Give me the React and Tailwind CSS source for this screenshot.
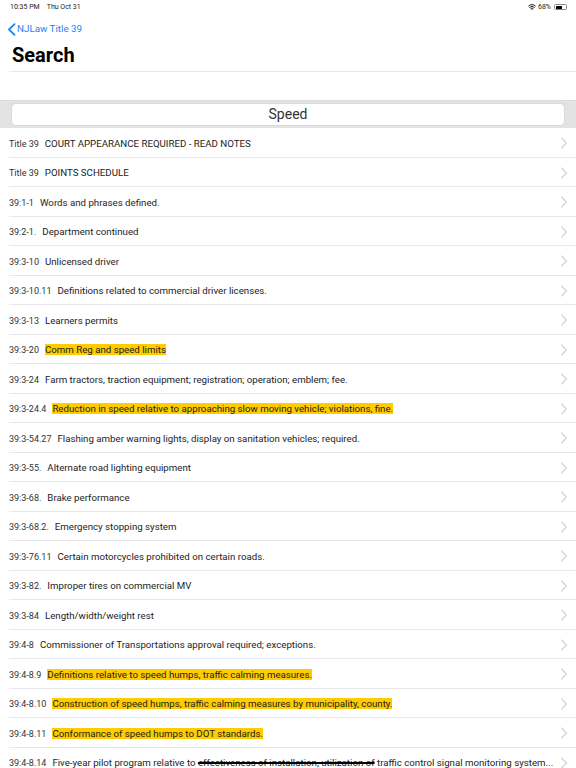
import React from 'react';
import { ChevronRight, Wifi } from 'lucide-react';

const rows = [
  { code: 'Title 39', text: 'COURT APPEARANCE REQUIRED - READ NOTES' },
  { code: 'Title 39', text: 'POINTS SCHEDULE' },
  { code: '39:1-1', text: 'Words and phrases defined.' },
  { code: '39:2-1.', text: 'Department continued' },
  { code: '39:3-10', text: 'Unlicensed driver' },
  { code: '39:3-10.11', text: 'Definitions related to commercial driver licenses.' },
  { code: '39:3-13', text: 'Learners permits' },
  { code: '39:3-20', text: 'Comm Reg and speed limits', hit: true },
  { code: '39:3-24', text: 'Farm tractors, traction equipment; registration; operation; emblem; fee.' },
  { code: '39:3-24.4', text: 'Reduction in speed relative to approaching slow moving vehicle; violations, fine.', hit: true },
  { code: '39:3-54.27', text: 'Flashing amber warning lights, display on sanitation vehicles; required.' },
  { code: '39:3-55.', text: 'Alternate road lighting equipment' },
  { code: '39:3-68.', text: 'Brake performance' },
  { code: '39:3-68.2.', text: 'Emergency stopping system' },
  { code: '39:3-76.11', text: 'Certain motorcycles prohibited on certain roads.' },
  { code: '39:3-82.', text: 'Improper tires on commercial MV' },
  { code: '39:3-84', text: 'Length/width/weight rest' },
  { code: '39:4-8', text: 'Commissioner of Transportations approval required; exceptions.' },
  { code: '39:4-8.9', text: 'Definitions relative to speed humps, traffic calming measures.', hit: true },
  { code: '39:4-8.10', text: 'Construction of speed humps, traffic calming measures by municipality, county.', hit: true },
  { code: '39:4-8.11', text: 'Conformance of speed humps to DOT standards.', hit: true },
];

const Row = ({ code, children }) => (
  <div className="flex h-[29.5px] shrink-0 items-center border-b border-[#e8e8ea] ml-[9px] pr-[2px] pt-[2px]">
    <span className="text-[9px] text-[#333] mr-[6px] pt-[2px] whitespace-nowrap">{code}</span>
    <span className="flex-1 min-w-0 text-[9.7px] text-[#1c1c1e] pt-[2px] whitespace-nowrap overflow-hidden">{children}</span>
    <ChevronRight className="w-[20px] h-[20px] text-[#d4d4d8] shrink-0" strokeWidth={1.4} />
  </div>
);

const App = () => {
  return (
    <div className="w-[576px] h-[768px] bg-white overflow-hidden flex flex-col font-['Roboto','Liberation_Sans',sans-serif]">
      <div className="h-[14px] flex shrink-0 items-center justify-between pl-[10px] pr-[9px] text-[7px] text-[#222]">
        <div className="flex gap-[7px]">
          <span>10:35 PM</span>
          <span>Thu Oct 31</span>
        </div>
        <div className="flex items-center gap-[2px]">
          <Wifi className="w-[8px] h-[8px]" strokeWidth={3} />
          <span>68%</span>
          <div className="w-[13px] h-[6px] border border-[#888] rounded-[1.5px] p-[0.5px] ml-[1px]">
            <div className="h-full w-[68%] bg-black rounded-[0.5px]" />
          </div>
        </div>
      </div>
      <div className="h-[14px] shrink-0 mt-[8px] flex items-center pl-[7px] text-[9.8px] text-[#1a82fb]">
        <svg className="w-[9px] h-[13px] mr-[1px]" viewBox="0 0 9 13" fill="none" stroke="currentColor" strokeWidth="1.8" strokeLinecap="round" strokeLinejoin="round">
          <path d="M7.5 1.2 L2 6.5 L7.5 11.8" />
        </svg>
        <span>NJLaw Title 39</span>
      </div>
      <div className="ml-[9px] h-[36px] shrink-0 border-b border-[#e8e8ea] pl-[3px] pt-[7px] text-[20px] leading-[24px] font-bold text-black">
        Search
      </div>
      <div className="h-[28px] shrink-0" />
      <div className="h-[28px] shrink-0 bg-[#e3e3e5] pt-[3px] px-[12px] border-t border-[#dcdcde]">
        <div className="h-[21px] bg-white rounded-[3px] shadow-[0_0_1px_rgba(0,0,0,0.4)] flex items-center justify-center text-[14px] text-[#333]">
          Speed
        </div>
      </div>
      {rows.map((r) => (
        <Row key={r.code + r.text} code={r.code}>
          {r.hit ? <span className="bg-[#ffcc00]">{r.text}</span> : r.text}
        </Row>
      ))}
      <Row code="39:4-8.14">
        Five-year pilot program relative to{' '}
        <span className="line-through decoration-black decoration-2">effectiveness of installation, utilization of</span>{' '}
        traffic control signal monitoring system...
      </Row>
    </div>
  );
};

export default App;
